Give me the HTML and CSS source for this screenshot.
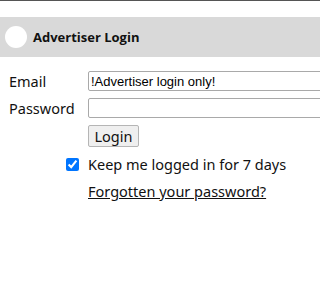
FILE: index.html
```html
<!DOCTYPE html>
<html>
<head>
<meta charset="utf-8">
<link rel="stylesheet" href="styles.css">
</head>
<body>
<div class="page">
  <div class="topline"></div>
  <div class="header">
    <span class="avatar"></span>
    <span class="title">Advertiser Login</span>
  </div>
  <form class="form">
    <label class="label" for="email">Email</label>
    <input class="field" id="email" type="text" value="!Advertiser login only!">
    <label class="label" for="pw">Password</label>
    <input class="field" id="pw" type="password">
    <span></span>
    <div class="btnrow"><button type="button" class="btn">Login</button></div>
    <div class="checkcell"><input type="checkbox" class="check" checked></div>
    <span class="text">Keep me logged in for 7 days</span>
    <span></span>
    <a class="text link" href="#">Forgotten your password?</a>
  </form>
</div>
</body>
</html>
```

FILE: styles.css
```css
html, body {
  margin: 0;
  padding: 0;
  background: #fff;
}
.page {
  width: 100%;
  height: 288px;
  overflow: hidden;
}
.topline {
  height: 1px;
  background: #555;
}
.header {
  margin-top: 16px;
  height: 40px;
  background: #d9d9d9;
  display: flex;
  align-items: center;
  padding-left: 5px;
}
.avatar {
  width: 22px;
  height: 22px;
  border-radius: 50%;
  background: #fff;
  flex: none;
}
.title {
  margin-left: 6px;
  font-family: "Open Sans", sans-serif;
  font-weight: 700;
  font-size: 13px;
  color: #111;
}
.form {
  display: grid;
  grid-template-columns: 88px minmax(0, 1fr);
  row-gap: 7px;
  margin-top: 14px;
  align-items: center;
}
.label {
  padding-left: 9px;
  font-family: "Noto Sans", sans-serif;
  font-size: 14.5px;
  color: #111;
}
.field {
  box-sizing: border-box;
  width: 240px;
  height: 20px;
  margin: 0;
  border: 1px solid #a9a9a9;
  border-radius: 2px;
  padding: 1px 2px;
  font-family: "Liberation Sans", Arial, sans-serif;
  font-size: 13px;
  color: #000;
}
.btnrow {
  grid-column: 2;
}
.btn {
  box-sizing: border-box;
  height: 22px;
  width: 51px;
  padding: 0;
  margin: 0;
  background: #efefef;
  border: 1px solid #b5b5b5;
  border-radius: 2px;
  font-family: "Noto Sans", sans-serif;
  font-size: 14.5px;
  color: #111;
  line-height: 18px;
}
.checkcell {
  display: flex;
  justify-content: flex-end;
  padding-right: 9px;
}
.check {
  margin: 0;
  width: 13px;
  height: 13px;
  accent-color: #0075ff;
}
.text {
  font-family: "Noto Sans", sans-serif;
  font-size: 14.5px;
  color: #111;
  white-space: nowrap;
}
.link {
  color: #111;
  text-decoration: underline;
}
```
